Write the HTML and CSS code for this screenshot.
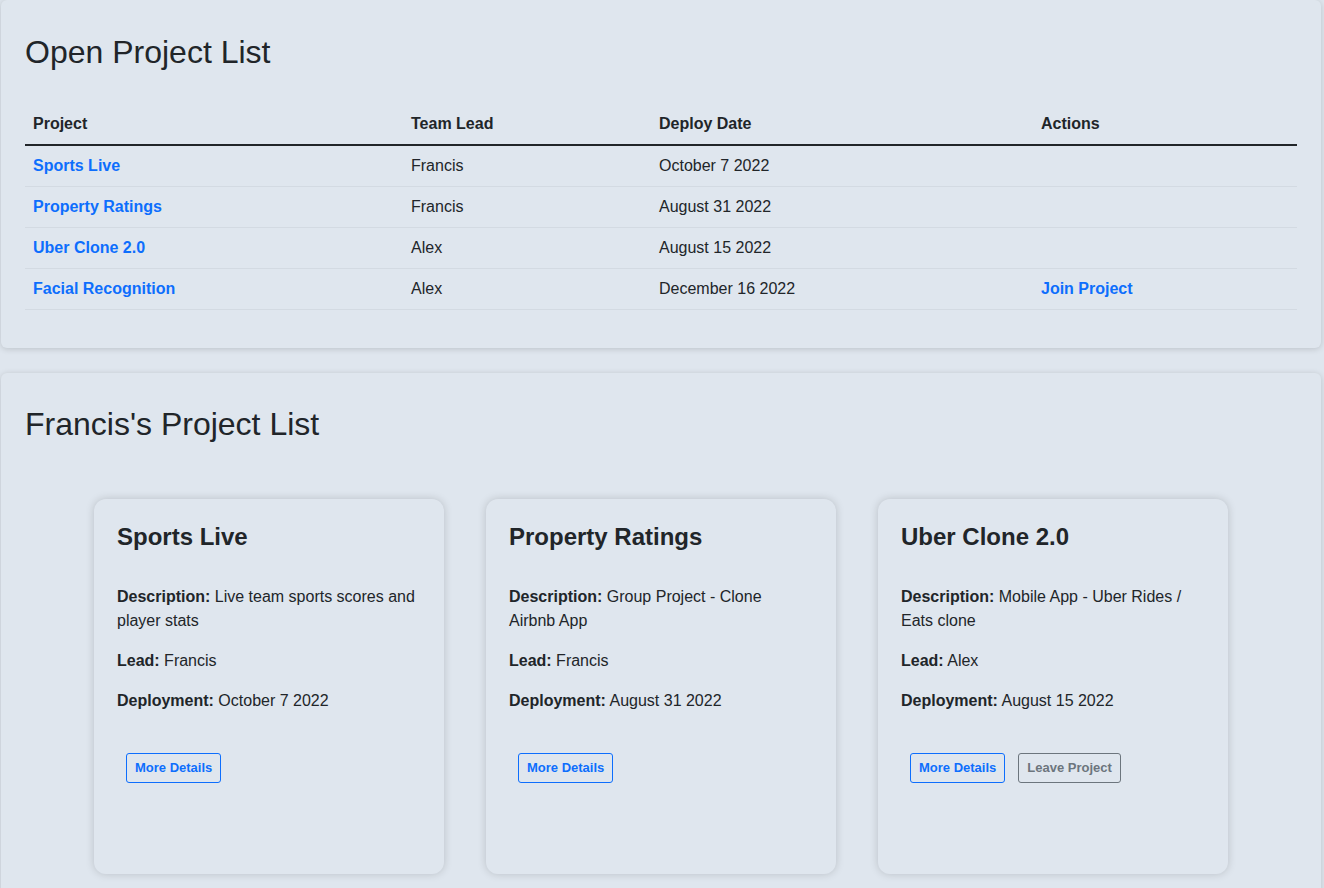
FILE: index.html
```html
<!DOCTYPE html>
<html lang="en">
<head>
<meta charset="utf-8">
<title>Projects</title>
<link rel="stylesheet" href="styles.css">
</head>
<body>
<main class="page">
  <section class="panel panel-open">
    <h2 class="panel-title">Open Project List</h2>
    <table class="project-table">
      <colgroup>
        <col class="col-project">
        <col class="col-lead">
        <col class="col-date">
        <col class="col-actions">
      </colgroup>
      <thead>
        <tr>
          <th>Project</th>
          <th>Team Lead</th>
          <th>Deploy Date</th>
          <th>Actions</th>
        </tr>
      </thead>
      <tbody>
        <tr>
          <td><a class="link" href="#">Sports Live</a></td>
          <td>Francis</td>
          <td>October 7 2022</td>
          <td></td>
        </tr>
        <tr>
          <td><a class="link" href="#">Property Ratings</a></td>
          <td>Francis</td>
          <td>August 31 2022</td>
          <td></td>
        </tr>
        <tr>
          <td><a class="link" href="#">Uber Clone 2.0</a></td>
          <td>Alex</td>
          <td>August 15 2022</td>
          <td></td>
        </tr>
        <tr>
          <td><a class="link" href="#">Facial Recognition</a></td>
          <td>Alex</td>
          <td>December 16 2022</td>
          <td><a class="link" href="#">Join Project</a></td>
        </tr>
      </tbody>
    </table>
  </section>

  <section class="panel panel-mine">
    <h2 class="panel-title">Francis's Project List</h2>
    <div class="cards">
      <article class="card">
        <h3 class="card-title">Sports Live</h3>
        <p><strong>Description:</strong> Live team sports scores and player stats</p>
        <p><strong>Lead:</strong> Francis</p>
        <p><strong>Deployment:</strong> October 7 2022</p>
        <div class="card-actions">
          <button class="btn btn-primary-outline" type="button">More Details</button>
        </div>
      </article>
      <article class="card">
        <h3 class="card-title">Property Ratings</h3>
        <p><strong>Description:</strong> Group Project - Clone Airbnb App</p>
        <p><strong>Lead:</strong> Francis</p>
        <p><strong>Deployment:</strong> August 31 2022</p>
        <div class="card-actions">
          <button class="btn btn-primary-outline" type="button">More Details</button>
        </div>
      </article>
      <article class="card">
        <h3 class="card-title">Uber Clone 2.0</h3>
        <p><strong>Description:</strong> Mobile App - Uber Rides / Eats clone</p>
        <p><strong>Lead:</strong> Alex</p>
        <p><strong>Deployment:</strong> August 15 2022</p>
        <div class="card-actions">
          <button class="btn btn-primary-outline" type="button">More Details</button>
          <button class="btn btn-secondary-outline" type="button">Leave Project</button>
        </div>
      </article>
    </div>
  </section>
</main>
</body>
</html>
```

FILE: styles.css
```css
* {
  box-sizing: border-box;
}

html, body {
  margin: 0;
  padding: 0;
}

body {
  background: #dfe6ee;
  color: #212529;
  font-family: "Liberation Sans", Arial, sans-serif;
  font-size: 16px;
  line-height: 1.5;
  overflow: hidden;
}

.page {
  display: flex;
  flex-direction: column;
  gap: 25px;
  width: 1320px;
  margin-left: 1px;
  margin-top: 0;
}

.panel {
  background: #dfe6ee;
  border-radius: 6px;
  box-shadow: 0 1px 6px rgba(0, 0, 0, 0.16);
  padding: 32px 24px 0 24px;
}

.panel-open {
  padding-top: 33px;
  padding-bottom: 38px;
}

.panel-mine {
  padding-bottom: 40px;
}

.panel-title {
  margin: 0;
  font-size: 32px;
  font-weight: 400;
  line-height: 1.2;
}

.panel-open .panel-title {
  margin-bottom: 33px;
}

.panel-mine .panel-title {
  margin-bottom: 55px;
}

.project-table {
  width: 100%;
  border-collapse: collapse;
  table-layout: fixed;
}

.col-project { width: 378px; }
.col-lead { width: 248px; }
.col-date { width: 382px; }
.col-actions { width: 264px; }

.project-table th,
.project-table td {
  text-align: left;
  padding: 8px;
  line-height: 24px;
  vertical-align: top;
}

.project-table th {
  font-weight: 700;
  border-bottom: 2px solid #212529;
}

.project-table td {
  border-bottom: 1px solid #d3dae2;
}

.link {
  color: #0d6efd;
  font-weight: 700;
  text-decoration: none;
}

.cards {
  display: flex;
  justify-content: center;
  gap: 42px;
}

.card {
  width: 350px;
  height: 375px;
  background: #dfe6ee;
  border-radius: 12px;
  box-shadow: 0 0 8px rgba(0, 0, 0, 0.17);
  padding: 24px 25px 24px 23px;
}

.card-title {
  margin: 0 0 33px 0;
  font-size: 24px;
  font-weight: 700;
  line-height: 1.2;
}

.card p {
  margin: 0 0 16px 0;
}

.card-actions {
  display: flex;
  gap: 13px;
  padding-left: 9px;
  margin-top: 40px;
}

.btn {
  font-family: inherit;
  font-size: 13px;
  font-weight: 700;
  line-height: 20px;
  padding: 4px 8px;
  background: transparent;
  border-radius: 3px;
  cursor: pointer;
}

.btn-primary-outline {
  color: #0d6efd;
  border: 1px solid #0d6efd;
}

.btn-secondary-outline {
  color: #6c757d;
  border: 1px solid #6c757d;
}
```
